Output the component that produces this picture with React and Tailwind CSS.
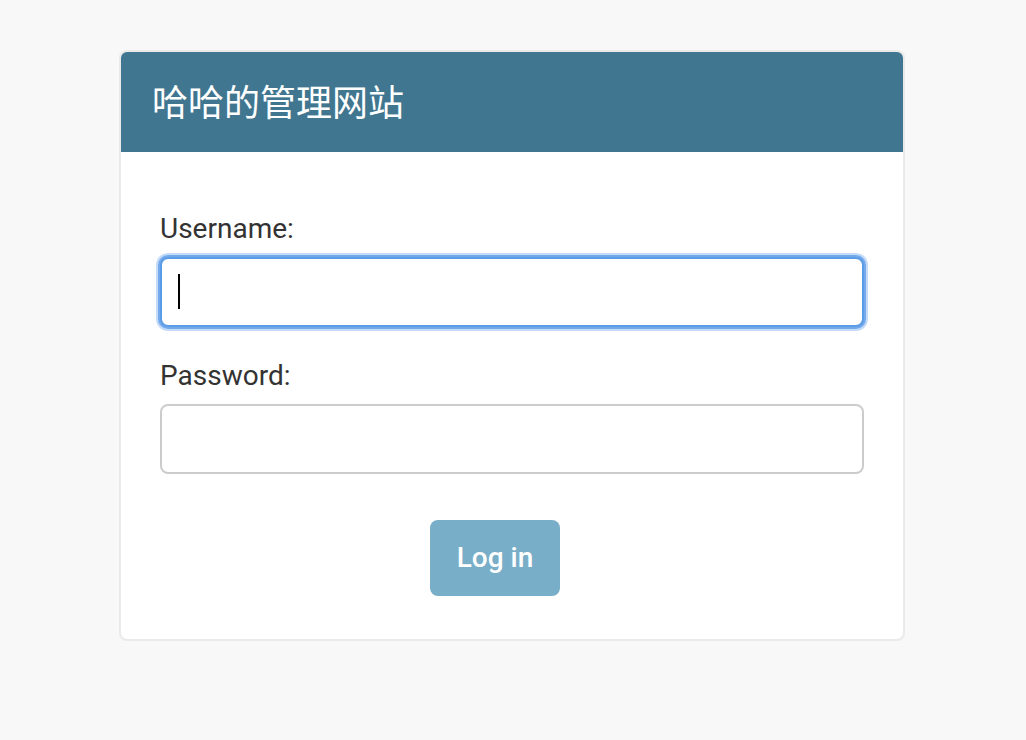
import React from 'react';

const font = { fontFamily: 'Roboto, "Noto Sans CJK SC", "Liberation Sans", sans-serif' };

const Field = ({ label, type, focused }) => (
  <div>
    <label className="block h-[56px] text-[28px] leading-[56px] text-[#333]">{label}</label>
    <div className="relative">
      <input
        type={type}
        className={
          focused
            ? 'block h-[70px] w-full rounded-[8px] border-2 border-[#5b9ce6] bg-white px-[16px] text-[28px] outline-none shadow-[0_0_0_2px_#74aaec,0_0_0_4px_#c4dcf8]'
            : 'block h-[70px] w-full rounded-[8px] border-2 border-[#cccccc] bg-white px-[16px] text-[28px] outline-none'
        }
        style={font}
      />
      {/* fake caret */}
      {focused && <span className="absolute left-[18px] top-[17px] h-[35px] w-[2px] bg-black" />}
    </div>
  </div>
);

export default function App() {
  return (
    <div className="min-h-screen bg-[#f8f8f8] pt-[50px]" style={font}>
      <div className="ml-[119px] w-[786px] overflow-hidden rounded-[8px] border-2 border-[#eaeaea] bg-white">
        {/* Header */}
        <div className="flex h-[100px] items-center bg-[#417690] px-[31px] pt-[4px]">
          <h1 className="text-[36px] font-normal leading-[40px] text-white">哈哈的管理网站</h1>
        </div>

        {/* Form */}
        <div className="px-[39px] pb-[43px] pt-[49px]">
          <Field label="Username:" type="text" focused />
          <div className="mt-[21px]">
            <Field label="Password:" type="password" />
          </div>
          <div className="mt-[46px] pl-[270px]">
            <button
              type="button"
              className="h-[76px] w-[130px] rounded-[8px] bg-[#79aec8] text-[28px] font-medium text-white"
            >
              Log in
            </button>
          </div>
        </div>
      </div>
    </div>
  );
}
